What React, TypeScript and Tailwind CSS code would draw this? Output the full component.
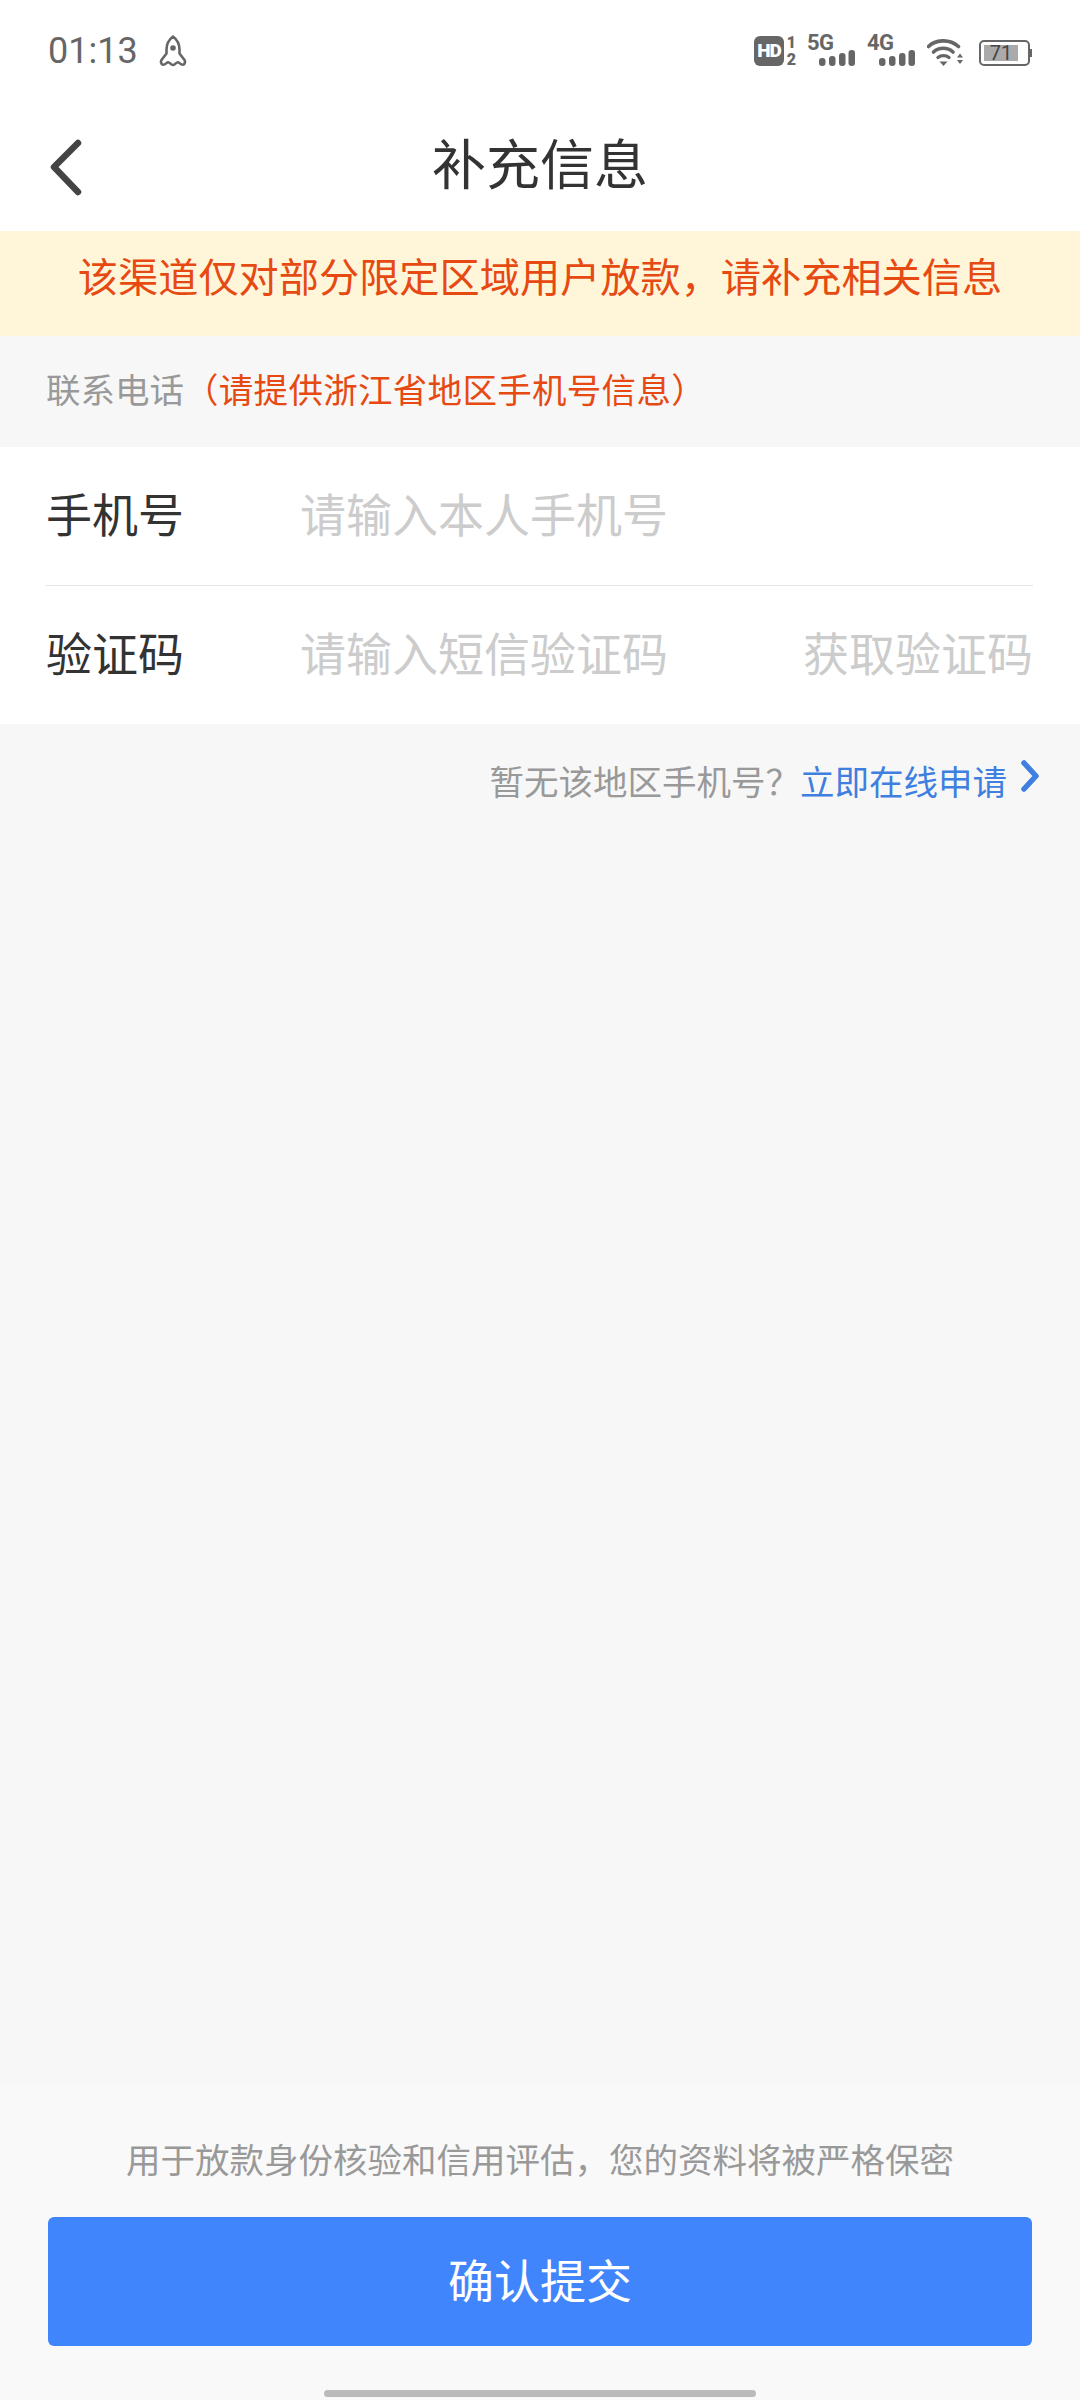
import React from "react";

const FONT = "[font-family:'Noto_Sans_CJK_SC','Noto_Sans',sans-serif]";

function SignalBars() {
  return (
    <svg width="36" height="16" viewBox="0 0 36 16" className="block">
      <rect x="0" y="8" width="6.500" height="8" rx="3" fill="#666" />
      <rect x="10" y="6" width="6.500" height="10" rx="3" fill="#666" />
      <rect x="20" y="3" width="6.500" height="13" rx="3" fill="#666" />
      <rect x="29.500" y="0" width="6.500" height="16" rx="3" fill="#666" />
    </svg>
  );
}

function Signal({ label }: { label: string }) {
  return (
    <div className="relative h-[30px] w-[48px]">
      <span className="absolute left-0 top-[-5px] font-['Roboto'] text-[22px] font-bold leading-[24px] tracking-[-0.5px] text-[#666]">
        {label}
      </span>
      <div className="absolute bottom-0 right-0">
        <SignalBars />
      </div>
    </div>
  );
}

function StatusBar() {
  return (
    <div className="flex h-[90px] items-start justify-between pl-[48px] pr-[48px] pt-[30px]">
      <div className="flex items-center">
        <span className="font-['Roboto'] text-[36px] leading-[42px] text-[#666]">01:13</span>
        <svg width="28" height="32" viewBox="0 0 28 32" className="ml-[21px]" fill="none" stroke="#666" strokeWidth="2.600" strokeLinejoin="round">
          <path d="M14 1.500C9.500 5 7.500 9.500 7.500 14.500v4L2.500 25c-1 1.600-.4 4.500 1.500 4.800 2.500.3 3.500-2.600 5.200-2.600 1.600 0 2.600 2.800 4.800 2.800s3.200-2.800 4.800-2.800c1.700 0 2.700 2.900 5.200 2.600 1.900-.3 2.500-3.200 1.500-4.800l-5-6.500v-4C20.500 9.500 18.500 5 14 1.500z" />
          <circle cx="14" cy="13" r="2.800" fill="#666" stroke="none" />
        </svg>
      </div>
      <div className="flex items-start pt-[6px]">
        <div className="flex h-[30px] w-[30px] items-center justify-center rounded-[6px] bg-[#666] font-['Roboto'] text-[19px] font-black tracking-[-1px] text-white">
          HD
        </div>
        <div className="ml-[1px] mt-[-2px] flex w-[13px] flex-col items-center font-['Roboto'] text-[16px] font-black leading-[17px] text-[#666]">
          <span>1</span>
          <span>2</span>
        </div>
        <div className="ml-[9px]">
          <Signal label="5G" />
        </div>
        <div className="ml-[12px]">
          <Signal label="4G" />
        </div>
        <svg width="38" height="28" viewBox="0 0 38 28" className="ml-[12px] mt-[2px]" fill="none">
          <path d="M1.500 8.500C8 2 22 0 31.500 8.500" stroke="#666" strokeWidth="3.600" strokeLinecap="round" />
          <path d="M6.500 14C12 9 20.500 9 26 14" stroke="#666" strokeWidth="3.600" strokeLinecap="round" />
          <path d="M11 19.500c3-2.500 8-2.500 11 0" stroke="#666" strokeWidth="3.400" strokeLinecap="round" />
          <path d="M12.500 23.500h8l-4 4.500z" fill="#666" />
          <path d="M30 19.500l3-4 3 4zM30 22h6l-3 4z" fill="#666" />
        </svg>
        <div className="ml-[14px] mt-[4px] flex items-center">
          <div className="flex h-[26px] w-[51px] items-center rounded-[5px] border-2 border-[#666] p-[3px]">
            <div className="flex h-full w-[34px] items-center justify-center bg-[#aaa] font-['Roboto'] text-[20px] leading-none text-[#444]">
              71
            </div>
          </div>
          <div className="h-[8px] w-[2px] bg-[#666]" />
        </div>
      </div>
    </div>
  );
}

function NavBar() {
  return (
    <div className="relative flex h-[141px] items-start justify-center">
      <svg width="36" height="62" viewBox="0 0 36 62" className="absolute left-[48px] top-[48px]" fill="none" stroke="#444" strokeWidth="6.500" strokeLinecap="round" strokeLinejoin="round">
        <path d="M30 5L6 29l24 25" />
      </svg>
      <h1 className="mt-[45px] text-[54px] font-normal leading-none text-[#333]">补充信息</h1>
    </div>
  );
}

function FormRow({ label, placeholder, action }: { label: string; placeholder: string; action?: string }) {
  return (
    <div className="flex h-[138px] items-center pb-[8px]">
      <div className="w-[254px] text-[46px] leading-none text-[#333]">{label}</div>
      <div className="flex-1 text-[46px] leading-none text-[#ccc]">{placeholder}</div>
      {action && <div className="text-[46px] leading-none text-[#ccc]">{action}</div>}
    </div>
  );
}

export default function App() {
  return (
    <div className={`flex h-[2400px] w-[1080px] flex-col overflow-hidden bg-[#f7f7f7] ${FONT}`}>
      <div className="bg-white">
        <StatusBar />
        <NavBar />
      </div>

      <div className="flex h-[105px] items-center justify-center bg-[#fff6da] pb-[17px] text-[40.200px] leading-none text-[#e64a12]">
        该渠道仅对部分限定区域用户放款，请补充相关信息
      </div>

      <div className="flex h-[111px] items-center pb-[6px] pl-[46px] text-[34.500px] leading-none text-[#999]">
        <span>联系电话</span>
        <span className="tracking-[0.3px] text-[#e64a12]">（请提供浙江省地区手机号信息）</span>
      </div>

      <div className="bg-white pl-[46px] pr-[47px]">
        <FormRow label="手机号" placeholder="请输入本人手机号" />
        <div className="h-px bg-[#e4e4e4]" />
        <FormRow label="验证码" placeholder="请输入短信验证码" action="获取验证码" />
      </div>

      <div className="flex h-[113px] items-center justify-end pr-[41px] text-[34.500px] leading-none">
        <span className="text-[#999]">暂无该地区手机号？</span>
        <span className="text-[#3f7fe0]">立即在线申请</span>
        <svg width="18" height="32" viewBox="0 0 18 32" className="ml-[14px] mt-[-10px]" fill="none" stroke="#3f7fe0" strokeWidth="5.500" strokeLinecap="round" strokeLinejoin="round">
          <path d="M3 3l12 13L3 29" />
        </svg>
      </div>

      <div className="mt-auto flex flex-col items-center bg-[#f9f9f9] px-[48px] pt-[53px]">
        <div className="text-[34.500px] leading-[44px] text-[#999]">用于放款身份核验和信用评估，您的资料将被严格保密</div>
        <button className="mt-[37px] flex h-[129px] w-full items-center justify-center rounded-[6px] bg-[#4185fd] pb-[6px] text-[46px] text-white">
          确认提交
        </button>
        <div className="mt-[44px] h-[7px] w-[432px] rounded-[4px] bg-[#bbb]" />
        <div className="h-[3px]" />
      </div>
    </div>
  );
}
